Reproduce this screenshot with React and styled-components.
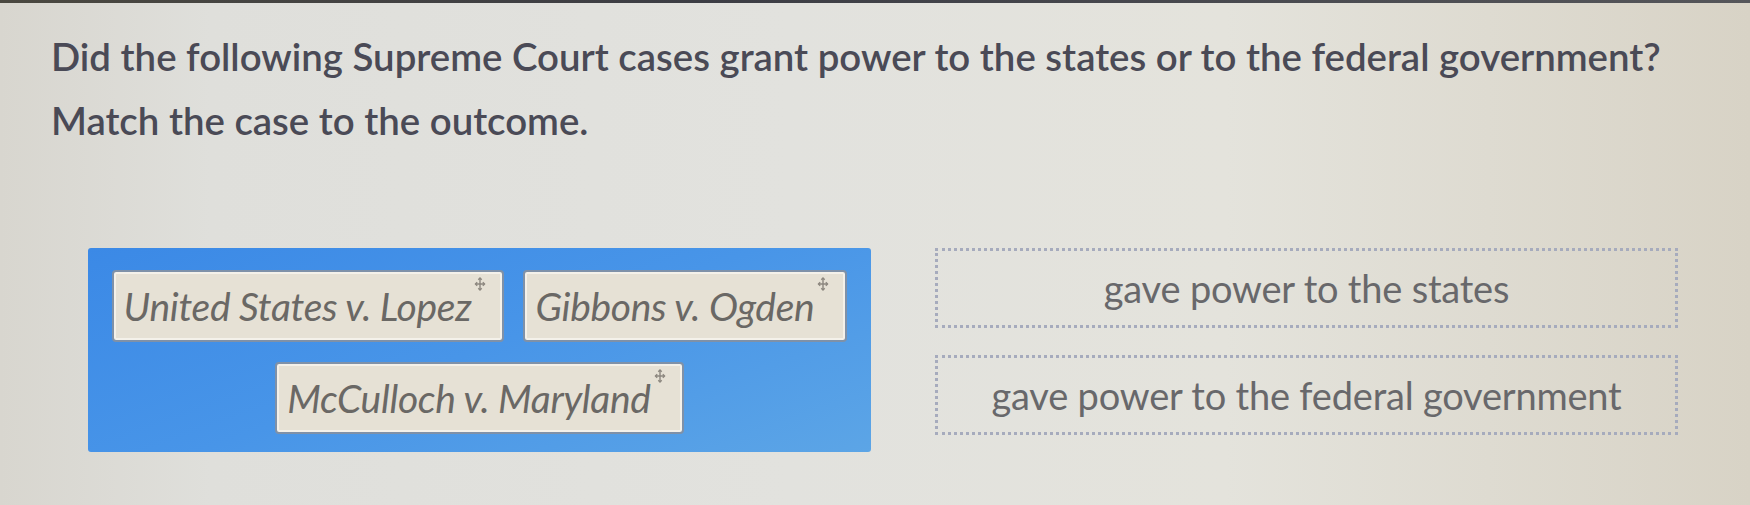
import React from "react";
import styled, { createGlobalStyle } from "styled-components";

const GlobalStyle = createGlobalStyle`
  html, body {
    margin: 0;
    padding: 0;
  }
  body {
    width: 1750px;
    height: 505px;
    overflow: hidden;
    font-family: "Lato", "Open Sans", sans-serif;
    background: linear-gradient(90deg, #d8d6cf 0%, #dfdfdb 12%, #e2e2de 45%, #e4e3dc 70%, #d8d3c6 100%);
  }
`;

const cases = [
  "United States v. Lopez",
  "Gibbons v. Ogden",
  "McCulloch v. Maryland",
];

const outcomes = [
  "gave power to the states",
  "gave power to the federal government",
];

export default function App() {
  return (
    <>
      <GlobalStyle />
      <Screen>
        <TopEdge />
        <Question>
          Did the following Supreme Court cases grant power to the states or to
          the federal government?
          <br />
          Match the case to the outcome.
        </Question>
        <MatchArea>
          <Bank>
            {cases.map((c) => (
              <Chip key={c}>
                {c}
                {/* four-way drag handle */}
                <Handle viewBox="0 0 12 14">
                  <path d="M6 1v12M1.5 7h9" />
                  <path d="M4.3 2.8L6 1l1.7 1.8M4.3 11.2L6 13l1.7-1.8M3.2 5.3L1.5 7l1.7 1.7M8.8 5.3L10.5 7 8.8 8.7" />
                </Handle>
              </Chip>
            ))}
          </Bank>
          <Targets>
            {outcomes.map((o) => (
              <Target key={o}>{o}</Target>
            ))}
          </Targets>
        </MatchArea>
      </Screen>
    </>
  );
}

const Screen = styled.div`
  width: 1750px;
  height: 505px;
  display: flex;
  flex-direction: column;
`;

const TopEdge = styled.div`
  height: 3px;
  background: linear-gradient(90deg, #4a4840, #3c3d44 40%, #55565a);
`;

const Question = styled.div`
  margin: 21px 0 0 51px;
  font-size: 38.4px;
  line-height: 64px;
  font-weight: 600;
  color: #4a4a56;
`;

const MatchArea = styled.div`
  display: flex;
  align-items: flex-start;
  gap: 64px;
  margin: 96px 0 0 88px;
`;

const Bank = styled.div`
  width: 783px;
  height: 204px;
  box-sizing: border-box;
  padding: 22px 16px 0;
  display: flex;
  flex-wrap: wrap;
  justify-content: center;
  align-content: flex-start;
  column-gap: 19px;
  row-gap: 20px;
  border-radius: 3px;
  background: linear-gradient(160deg, #3b89e6 0%, #4895e8 50%, #5ca5e6 100%);
`;

const Chip = styled.div`
  position: relative;
  height: 72px;
  box-sizing: border-box;
  display: flex;
  align-items: center;
  padding: 0 31px 0 10px;
  border-radius: 4px;
  border: 2px solid #7f91a8;
  box-shadow: inset 0 0 0 2px #f4f1ea;
  background: #e6e1d5;
  color: #6a6865;
  font-size: 39px;
  font-style: italic;
  letter-spacing: -0.3px;
  white-space: nowrap;
`;

const Handle = styled.svg`
  position: absolute;
  top: 5px;
  right: 16px;
  width: 12px;
  height: 14px;
  fill: none;
  stroke: #8c877f;
  stroke-width: 1.4;
`;

const Targets = styled.div`
  width: 743px;
  display: flex;
  flex-direction: column;
  gap: 27px;
`;

const Target = styled.div`
  height: 80px;
  box-sizing: border-box;
  display: flex;
  align-items: center;
  justify-content: center;
  border: 3px dotted #a6abbd;
  color: #68686b;
  font-size: 38px;
  letter-spacing: -0.2px;
`;
